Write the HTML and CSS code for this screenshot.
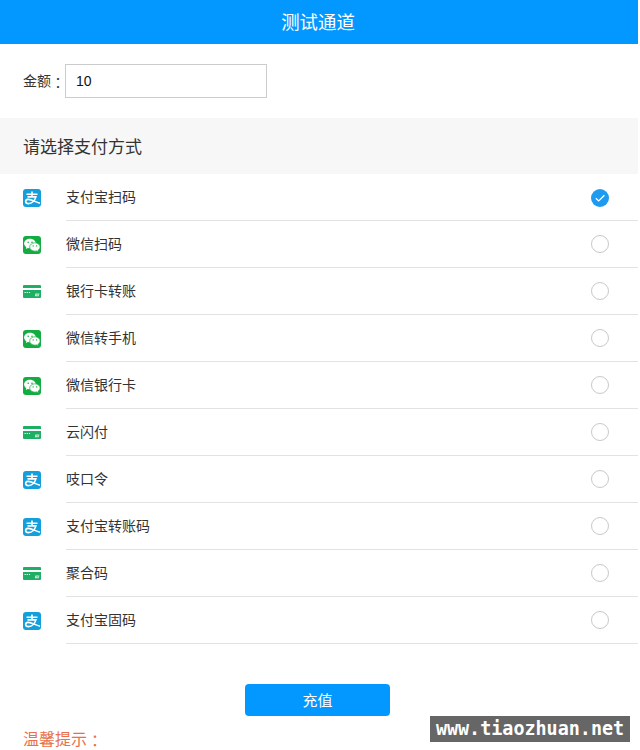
FILE: index.html
```html
<!DOCTYPE html>
<html lang="zh-CN">
<head>
<meta charset="utf-8">
<title>测试通道</title>
<link rel="stylesheet" href="styles.css">
</head>
<body>
<svg class="defs" aria-hidden="true">
  <symbol id="alipay" viewBox="0 0 18 18">
    <rect width="18" height="18" rx="3" fill="#129fdc"/>
    <path d="M3.500 5.200h11M9 2.500v5.200M4.500 7.900h8.400C12 11 9.200 14.600 5.400 14.600c-3.500 0-3.600-3.800-.6-4.200C8.400 10 11.500 12.800 17 14.300" fill="none" stroke="#fff" stroke-width="1.600"/>
  </symbol>
  <symbol id="wechat" viewBox="0 0 18 18">
    <rect width="18" height="18" rx="3" fill="#12ac40"/>
    <path d="M7 2.700c-3.300 0-5.900 2.100-5.900 4.800 0 1.500.9 2.900 2.200 3.700l-.5 1.800 2.100-1.100c.7.2 1.300.3 2.100.3 3.300 0 5.900-2.100 5.900-4.700S10.300 2.700 7 2.700z" fill="#fff"/>
    <path d="M11.900 6.800c-2.900 0-5.200 1.900-5.200 4.200s2.300 4.200 5.200 4.200c.6 0 1.300-.1 1.800-.3l1.800 1-.5-1.600c1.300-.8 2.100-2 2.100-3.300 0-2.300-2.300-4.200-5.200-4.200z" fill="#fff" stroke="#12ac40" stroke-width=".7"/>
    <g fill="#12ac40"><circle cx="5.200" cy="6.200" r=".8"/><circle cx="9" cy="6.200" r=".8"/><circle cx="10.200" cy="9.900" r=".7"/><circle cx="13.600" cy="9.900" r=".7"/></g>
  </symbol>
  <symbol id="card" viewBox="0 0 18 18">
    <path d="M1 2h16q1 0 1 1v2H0V3q0-1 1-1zM0 7h18v7q0 1-1 1H1q-1 0-1-1z" fill="#1eae64"/>
    <path d="M1.500 9.500h1.200M3.700 9.500h1.200M5.900 9.500h1.200" stroke="#fff" stroke-width="1"/>
    <path d="M12.400 10.500h4l-.6 2.700h-4z" fill="#c9efd9"/>
    <path d="M13.500 11.900h2" stroke="#1eae64" stroke-width=".7"/>
  </symbol>
</svg>
<main class="page">
  <header class="header">测试通道</header>
  <div class="amount">
    <label for="amount">金额<span class="colon" lang="zh-TW">：</span></label>
    <input id="amount" type="text" value="10">
  </div>
  <h2 class="section">请选择支付方式</h2>
  <ul class="methods">
    <li><svg class="icon"><use href="#alipay"/></svg><div class="method"><span>支付宝扫码</span><svg class="checked" viewBox="0 0 18 18"><circle cx="9" cy="9" r="9" fill="#1e9bf0"/><path d="M4.800 9.200l2.900 2.700 5.700-5.600" fill="none" stroke="#fff" stroke-width="1.300"/></svg></div></li>
    <li><svg class="icon"><use href="#wechat"/></svg><div class="method"><span>微信扫码</span><i class="radio"></i></div></li>
    <li><svg class="icon"><use href="#card"/></svg><div class="method"><span>银行卡转账</span><i class="radio"></i></div></li>
    <li><svg class="icon"><use href="#wechat"/></svg><div class="method"><span>微信转手机</span><i class="radio"></i></div></li>
    <li><svg class="icon"><use href="#wechat"/></svg><div class="method"><span>微信银行卡</span><i class="radio"></i></div></li>
    <li><svg class="icon"><use href="#card"/></svg><div class="method"><span>云闪付</span><i class="radio"></i></div></li>
    <li><svg class="icon"><use href="#alipay"/></svg><div class="method"><span>吱口令</span><i class="radio"></i></div></li>
    <li><svg class="icon"><use href="#alipay"/></svg><div class="method"><span>支付宝转账码</span><i class="radio"></i></div></li>
    <li><svg class="icon"><use href="#card"/></svg><div class="method"><span>聚合码</span><i class="radio"></i></div></li>
    <li><svg class="icon"><use href="#alipay"/></svg><div class="method"><span>支付宝固码</span><i class="radio"></i></div></li>
  </ul>
  <button class="submit" type="button">充值</button>
  <p class="tips">温馨提示<span class="colon" lang="zh-TW">：</span></p>
  <div class="watermark"><span>www.tiaozhuan.net</span></div>
</main>
</body>
</html>
```
FILE: styles.css
```css
* { box-sizing: border-box; }
body {
  margin: 0;
  background: #fff;
  color: #333;
  font: 14px/20px "Noto Sans CJK SC", sans-serif;
}
.defs { position: absolute; width: 0; height: 0; }
.page {
  position: relative;
  width: 638px;
  height: 750px;
  overflow: hidden;
}
.header {
  height: 44px;
  padding-right: 2px;
  line-height: 43px;
  background: #0398ff;
  color: #fff;
  font-size: 18.4px;
  text-align: center;
}
.colon {
  display: inline-block;
  font-family: "Noto Sans CJK TC", sans-serif;
  transform: translateY(1.5px);
}
.amount {
  display: flex;
  align-items: center;
  height: 74px;
  padding-left: 23px;
}
.amount label { padding-bottom: 2px; }
.amount input {
  width: 202px;
  height: 34px;
  padding: 0 10px;
  border: 1px solid #ccc;
  background: #fff;
  color: #111;
  font: 14px "Liberation Sans", sans-serif;
}
.section {
  height: 56px;
  margin: 0;
  padding-left: 23px;
  background: #f7f7f7;
  font-size: 17px;
  font-weight: 400;
  line-height: 55px;
}
.methods { margin: 0; padding: 0; list-style: none; }
.methods li {
  display: flex;
  align-items: center;
  height: 47px;
  padding-left: 23px;
}
.icon { width: 18px; height: 18px; margin: 1px 25px 0 0; }
.method {
  display: flex;
  flex: 1;
  align-items: center;
  justify-content: space-between;
  height: 47px;
  padding-right: 29px;
  border-bottom: 1px solid #e2e2e2;
}
.method span { padding-bottom: 2px; }
.checked { width: 18px; height: 18px; margin-top: 2px; }
.radio {
  width: 18px;
  height: 18px;
  border: 1px solid #c9c9c9;
  border-radius: 50%;
}
.submit {
  display: block;
  width: 145px;
  height: 32px;
  margin: 40px 0 0 245px;
  padding: 0;
  border: 0;
  border-radius: 4px;
  background: #0398ff;
  color: #fff;
  font: 15px/32px "Noto Sans CJK SC", sans-serif;
}
.tips {
  margin: 12px 0 0 23px;
  color: #e8704c;
  font-size: 16px;
  line-height: 21px;
}
.watermark {
  position: absolute;
  left: 430px;
  top: 716px;
  width: 200px;
  height: 26px;
  background: #666;
  color: #fff;
  font: bold 18.4px/26px "DejaVu Sans Mono", monospace;
  text-align: center;
}
.watermark span { display: inline-block; transform: scaleY(1.08); }
```
